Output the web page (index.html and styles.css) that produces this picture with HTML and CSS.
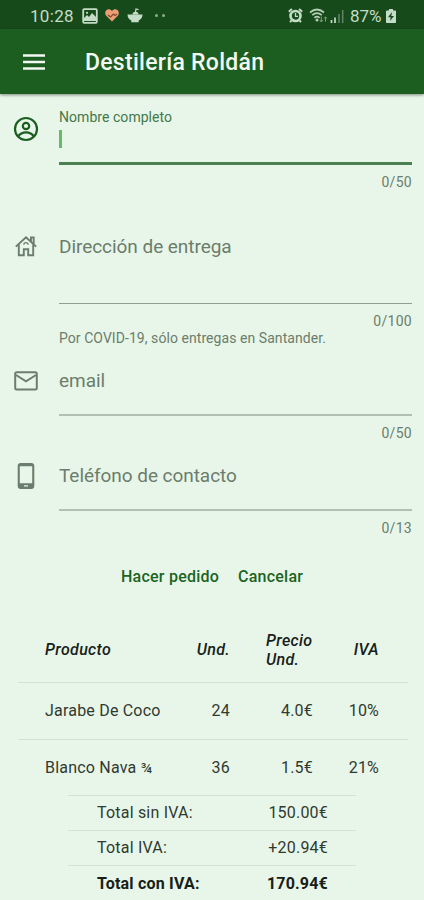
FILE: index.html
```html
<!DOCTYPE html>
<html lang="es">
<head>
    <meta charset="UTF-8">
    <meta name="viewport" content="width=device-width, initial-scale=1.0">
    <title>Destilería Roldán</title>
    <link rel="stylesheet" href="styles.css">
</head>
<body>
    <div class="statusbar">
        <span class="clock">10:28</span>
        <svg class="s-image" width="16" height="16" viewBox="0 0 16 16"><rect x="1.2" y="1.2" width="13.6" height="13.6" rx="1" fill="none" stroke="#c5dcc6" stroke-width="1.8"/><path d="M2 13V10l3-3 2 2 3-4 4 4v4z" fill="#c5dcc6"/><circle cx="5" cy="4.8" r="1.1" fill="#c5dcc6"/></svg>
        <svg class="s-heart" width="14" height="13" viewBox="0 0 14 13"><path d="M7 12.6L1.2 6.8C-.2 5-.1 2.500 1.300 1.200 3-.2 5.600 0 7 2 8.400 0 11-.2 12.700 1.200 14.100 2.500 14.200 5 12.800 6.800z" fill="#ee9d76"/><path d="M3 6l2.500 2L8.500 5l1.500 1.500L12 5" fill="none" stroke="#7b4a2c" stroke-width="1.100"/></svg>
        <svg class="s-bowl" width="16" height="15" viewBox="0 0 16 15"><path d="M.5 6.500h15c0 3-1.500 5-3.800 6v1.700H4.300v-1.700C2 11.500.5 9.500.5 6.500z" fill="#c5dcc6"/><path d="M5.500 6.500a3 2.800 0 0 1 6 0z" fill="#c5dcc6"/><path d="M8.500 4L9 1l2.500.6" fill="none" stroke="#c5dcc6" stroke-width="1.200"/></svg>
        <span class="more"><i></i><i></i></span>
        <span class="spacer"></span>
        <svg class="s-alarm" width="15" height="15" viewBox="0 0 15 15"><circle cx="7.500" cy="8" r="5" fill="none" stroke="#c5dcc6" stroke-width="2.600"/><path d="M.8 3.800L3.900 1M14.200 3.800L11.100 1M3.500 12.500L2 14.200M11.500 12.500L13 14.200" stroke="#c5dcc6" stroke-width="1.900"/><path d="M7.500 5v3.300H10" fill="none" stroke="#c5dcc6" stroke-width="1.300"/></svg>
        <svg class="s-wifi" width="19" height="15" viewBox="0 0 19 15"><path d="M1 4.500Q8 -1.500 15 4.500M3.200 7.200Q8 3 12.800 7.200M5.400 9.900Q8 7.500 10.600 9.900" fill="none" stroke="#b5ceb6" stroke-width="1.700"/><circle cx="8" cy="12" r="1.500" fill="#b5ceb6"/><path d="M12.300 8.500v5M10.800 12l1.500 2 1.500-2M16.500 13.500V9M15.200 10.500l1.300-1.700 1.300 1.700" fill="none" stroke="#7ea081" stroke-width="1"/></svg>
        <svg class="s-signal" width="14" height="14" viewBox="0 0 14 14"><path d="M1.500 14v-3M5 14V8.500" stroke="#c5dcc6" stroke-width="1.700"/><path d="M9 14V5M12.700 14V1" stroke="#638566" stroke-width="1.500"/></svg>
        <span class="percent">87%</span>
        <svg class="s-battery" width="10" height="14" viewBox="0 0 10 14"><path d="M3 0h4v1.500h2.200q.8 0 .8.800v10.900q0 .8-.8.800H.8q-.8 0-.8-.8V2.300q0-.8.800-.8H3z" fill="#c5dcc6"/><path d="M6 3L2 8.300h2.700L4 12l4-5H5.300z" fill="#174a1b"/></svg>
    </div>

    <div class="appbar">
        <svg class="menu" width="22" height="16" viewBox="0 0 22 16"><path d="M0 1.500h22M0 8h22M0 14.500h22" stroke="#f3f8f3" stroke-width="2.400"/></svg>
        <h1>Destilería Roldán</h1>
    </div>

    <form class="order-form">
        <div class="field field-name">
            <svg class="field-icon" width="26" height="26" viewBox="0 0 26 26" fill="none" stroke="#1b5e20" stroke-width="2.200"><circle cx="13" cy="13" r="11"/><circle cx="13" cy="10" r="3.200"/><path d="M5.200 20.500C7 17.500 10 16.400 13 16.400s6 1.100 7.800 4.100"/></svg>
            <div class="control">
                <label>Nombre completo</label>
                <span class="caret"></span>
            </div>
            <div class="meta"><span class="counter">0/50</span></div>
        </div>

        <div class="field field-address">
            <svg class="field-icon" width="26" height="26" viewBox="0 0 26 26" fill="none" stroke="#6b7d6c" stroke-width="1.900"><path d="M2.800 13.600L13 4.200l10.200 9.400M5.800 11.200v11h5v-6h4.400v6h5v-11M18 8.500V4.500h2.700V11"/><path d="M10.800 11.800a2.200 2.200 0 0 1 4.400 0" stroke-width="1.200"/></svg>
            <div class="control">
                <label>Dirección de entrega</label>
            </div>
            <div class="meta">
                <span class="counter">0/100</span>
                <span class="helper">Por COVID-19, sólo entregas en Santander.</span>
            </div>
        </div>

        <div class="field field-email">
            <svg class="field-icon" width="26" height="26" viewBox="0 0 26 26" fill="none" stroke="#6b7d6c" stroke-width="2"><rect x="2.200" y="4.200" width="21.600" height="17.200" rx="1.500"/><path d="M3 7l10 6.300L23 7"/></svg>
            <div class="control">
                <label>email</label>
            </div>
            <div class="meta"><span class="counter">0/50</span></div>
        </div>

        <div class="field field-phone">
            <svg class="field-icon" width="26" height="26" viewBox="0 0 26 26"><path fill="#6b7d6c" fill-rule="evenodd" d="M7.700 0h10.600q3 0 3 3v20q0 3-3 3H7.700q-3 0-3-3V3q0-3 3-3zM6.800 3.200v17h12.400v-17zM11 22.200v1.400h4v-1.400z"/></svg>
            <div class="control">
                <label>Teléfono de contacto</label>
            </div>
            <div class="meta"><span class="counter">0/13</span></div>
        </div>

        <div class="actions">
            <button type="button" class="submit">Hacer pedido</button>
            <button type="button" class="cancel">Cancelar</button>
        </div>
    </form>

    <table class="products">
        <thead>
            <tr>
                <th class="product">Producto</th>
                <th class="units">Und.</th>
                <th class="price">Precio<br>Und.</th>
                <th class="tax">IVA</th>
            </tr>
        </thead>
        <tbody>
            <tr>
                <td class="product">Jarabe De Coco</td>
                <td class="units">24</td>
                <td class="price">4.0€</td>
                <td class="tax">10%</td>
            </tr>
            <tr>
                <td class="product">Blanco Nava <span class="fraction">¾</span></td>
                <td class="units">36</td>
                <td class="price">1.5€</td>
                <td class="tax">21%</td>
            </tr>
        </tbody>
    </table>

    <table class="totals">
        <tr>
            <td>Total sin IVA:</td>
            <td class="amount">150.00€</td>
        </tr>
        <tr>
            <td>Total IVA:</td>
            <td class="amount">+20.94€</td>
        </tr>
        <tr class="grand-total">
            <td>Total con IVA:</td>
            <td class="amount">170.94€</td>
        </tr>
    </table>
</body>
</html>
```

FILE: styles.css
```css
* {
    box-sizing: border-box;
}
body {
    font-family: Roboto, sans-serif;
    background-color: #e8f6e9;
    margin: 0;
    height: 900px;
    overflow: hidden;
}
svg {
    display: block;
    flex: none;
}
.statusbar {
    background-color: #174a1b;
    color: #c5dcc6;
    height: 29px;
    padding: 2px 28px 0 30px;
    display: flex;
    align-items: center;
    font-size: 17px;
}
.clock {
    width: 52px;
    letter-spacing: 0.3px;
}
.s-heart {
    margin-left: 7px;
}
.s-bowl {
    margin-left: 8px;
}
.more {
    display: flex;
    gap: 4px;
    margin-left: 12px;
}
.more i {
    width: 3px;
    height: 3px;
    border-radius: 50%;
    background-color: #8fae91;
}
.spacer {
    flex: 1;
}
.s-wifi {
    margin-left: 6px;
}
.s-signal {
    margin-left: 2px;
}
.percent {
    width: 34px;
    margin: 0 2px 0 6px;
}
.appbar {
    background-color: #1b5e20;
    color: #f3f8f3;
    height: 65px;
    padding-left: 23px;
    display: flex;
    align-items: center;
    box-shadow: 0 1px 3px rgba(0, 0, 0, 0.45);
}
.appbar h1 {
    margin: 2px 0 0 40px;
    font-size: 23px;
    font-weight: 500;
    letter-spacing: 0.27px;
}
.field {
    display: grid;
    grid-template-columns: 59px 1fr;
    grid-template-rows: auto 1fr;
    padding-right: 12px;
    color: #6b7d6c;
}
.field-icon {
    margin-left: 13px;
}
.control {
    border-bottom: 1px solid #8e9f8f;
    font-size: 19px;
    line-height: 36px;
    letter-spacing: -0.05px;
}
.control label {
    display: block;
}
.meta {
    grid-column: 2;
    padding-top: 9px;
    display: flex;
    flex-direction: column;
    font-size: 14px;
    line-height: 17px;
}
.counter {
    align-self: flex-end;
    letter-spacing: 0.3px;
}
.helper {
    letter-spacing: 0.06px;
}
.field-name {
    height: 135px;
}
.field-name .field-icon {
    margin-top: 22px;
}
.field-name .control {
    height: 71px;
    padding-top: 15px;
    border-bottom: 3px solid #4b8052;
}
.field-name label {
    color: #43784a;
    font-size: 14px;
    line-height: 17px;
    letter-spacing: 0.05px;
}
.caret {
    display: block;
    width: 3px;
    height: 18px;
    margin-top: 4px;
    background-color: #66bb6a;
}
.field-address {
    height: 134px;
}
.field-address .field-icon {
    margin-top: 4px;
}
.field-address .control {
    height: 75px;
}
.field-email {
    height: 95px;
}
.field-email .field-icon {
    margin-top: 5px;
}
.field-email .control,
.field-phone .control {
    height: 53px;
    border-bottom: 2px solid #b0c0b1;
    line-height: 35px;
}
.field-phone {
    height: 92px;
}
.field-phone .field-icon {
    margin-top: 5px;
}
.actions {
    height: 66px;
    padding: 16px 0 0 121px;
    display: flex;
    align-items: flex-start;
    gap: 19px;
}
.actions button {
    padding: 0;
    border: none;
    background: none;
    color: #1b6423;
    font: 500 16px/22px Roboto, sans-serif;
    letter-spacing: 0.23px;
    white-space: nowrap;
    cursor: pointer;
}
table {
    border-collapse: collapse;
    table-layout: fixed;
    color: #2f3a30;
    font-size: 16px;
    letter-spacing: 0.2px;
}
th, td {
    padding: 0;
    text-align: left;
}
.products {
    width: 390px;
    margin-left: 18px;
}
.products tr {
    height: 57px;
    border-bottom: 1px solid #d3e0d4;
}
.products thead tr {
    height: 66px;
}
.products th {
    padding-top: 2px;
    color: #172018;
    font-style: italic;
    font-weight: 500;
    line-height: 19px;
    letter-spacing: 0.35px;
}
.products .product {
    width: 150px;
    padding-left: 27px;
}
.products .units {
    width: 62px;
    text-align: right;
}
.products .price {
    width: 83px;
    text-align: right;
}
.products th.price {
    padding-left: 36px;
    text-align: left;
}
.products .tax {
    padding-right: 29px;
    text-align: right;
}
.products tbody tr:last-child {
    height: 56px;
    border-bottom: none;
}
.fraction {
    font-size: 15px;
}
.totals {
    width: 288px;
    margin-left: 68px;
}
.totals tr {
    height: 35px;
    border-top: 1px solid #d3e0d4;
}
.totals td {
    padding: 0 0 1px 29px;
}
.totals .amount {
    padding: 0 28px 1px 0;
    text-align: right;
}
.totals .grand-total {
    color: #172018;
    font-weight: 700;
}
.totals .grand-total td {
    padding-top: 1px;
    padding-bottom: 0;
}
```
